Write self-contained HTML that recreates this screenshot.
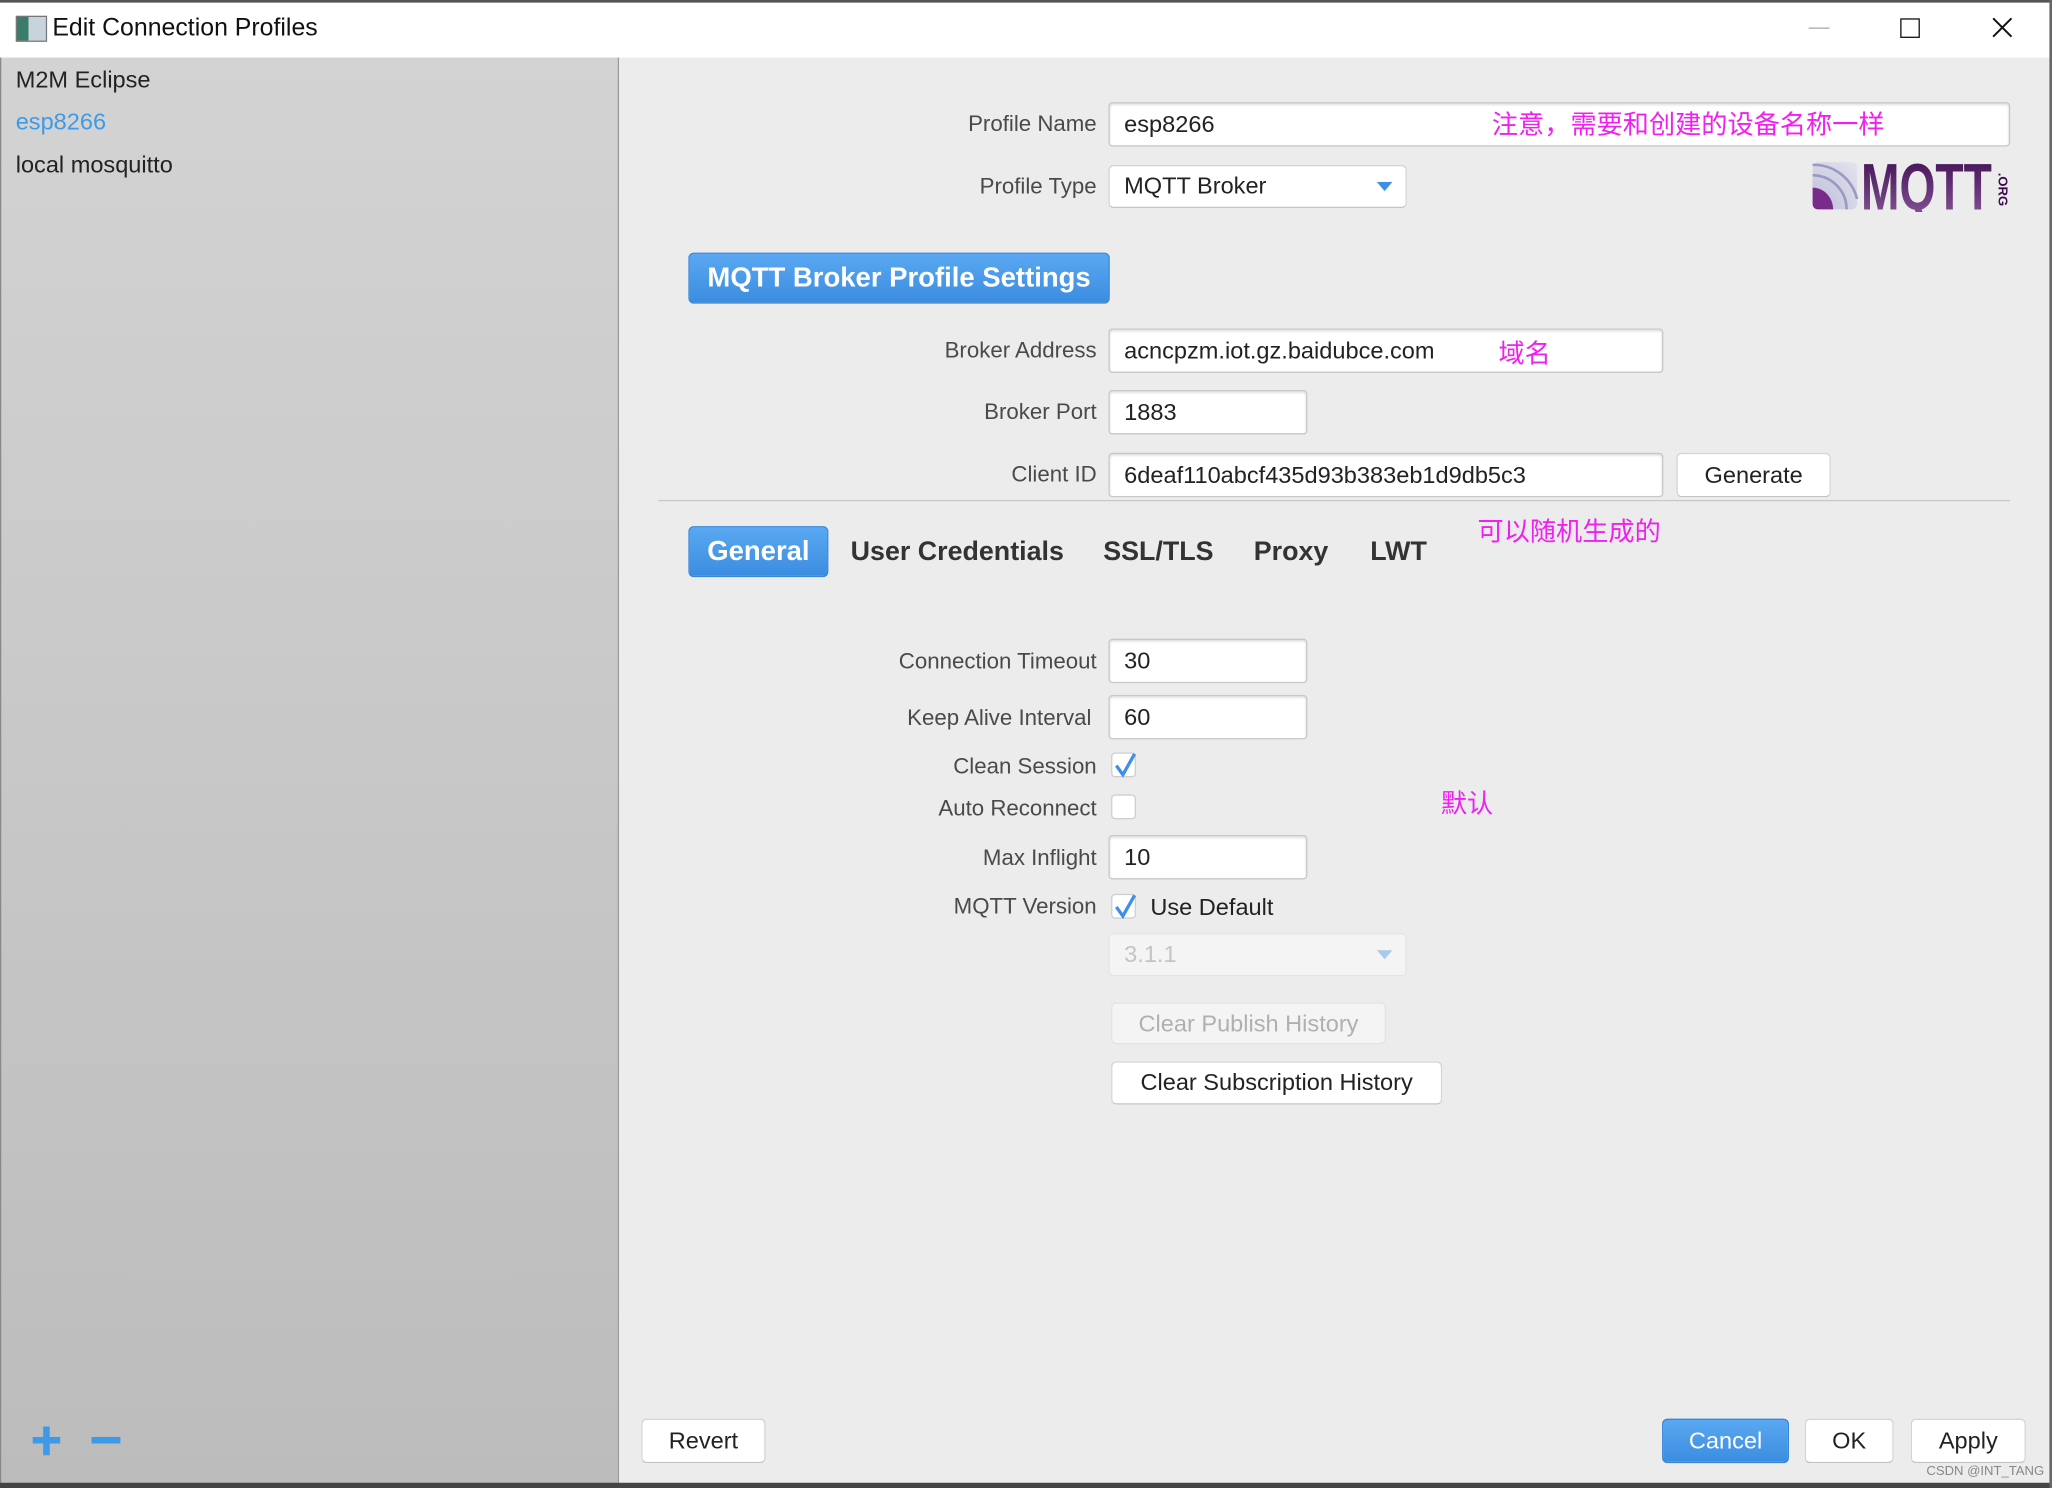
<!DOCTYPE html>
<html><head><meta charset="utf-8"><style>
html,body{margin:0;padding:0;width:2052px;height:1488px;overflow:hidden;background:#ececec}
#w{position:absolute;left:0;top:0;width:1568px;height:1137px;transform:scale(1.3087);transform-origin:0 0;font-family:"Liberation Sans","Noto Sans CJK SC",sans-serif;color:#333}
.a{position:absolute;white-space:nowrap}
.lbl{position:absolute;right:730px;font-size:17px;color:#4a4a4a;text-align:right;white-space:nowrap}
.in{position:absolute;background:#fff;border:1px solid #c8c8c8;border-radius:3px;box-shadow:inset 0 1px 2px rgba(0,0,0,.15);box-sizing:border-box;font-size:18px;color:#222;padding-left:11px;display:flex;align-items:center}
.btn{position:absolute;background:#fff;border:1px solid #d4d4d4;border-bottom-color:#c4c4c4;border-radius:4px;box-sizing:border-box;font-size:18px;color:#222;display:flex;align-items:center;justify-content:center}
.blue{background:linear-gradient(#5aa8f2,#3b8de0);color:#fff;border:1px solid #3a86d6;border-radius:4px}
.cb{position:absolute;width:19px;height:19px;background:#fff;border:1px solid #cfcfcf;border-radius:3px;box-sizing:border-box}
.ann{position:absolute;color:#f020f0;font-size:20px;white-space:nowrap}
.tab{position:absolute;font-size:20.5px;font-weight:bold;color:#333;top:410px}
</style></head><body><div id="w">
<div class="a" style="left:0;top:0;width:1568px;height:44px;background:#fff;border-top:2px solid #555;box-sizing:border-box"></div>
<div class="a" style="left:12px;top:12px;width:22px;height:18px;background:linear-gradient(90deg,#3a7b6a 40%,#c8d4dc 40%);border:1px solid #777"></div>
<div class="a" style="left:40px;top:11px;font-size:19px;color:#111">Edit Connection Profiles</div>
<div class="a" style="left:1382px;top:21px;width:16px;height:1px;background:#aaa"></div>
<div class="a" style="left:1452px;top:14px;width:13px;height:13px;border:1.5px solid #111"></div>
<svg class="a" style="left:1522px;top:13px" width="16" height="16"><path d="M1 1L15 15M15 1L1 15" stroke="#111" stroke-width="1.5"/></svg>
<div class="a" style="left:0;top:44px;width:471px;height:1093px;background:linear-gradient(#d3d3d3,#bcbcbc);border-right:1px solid #9a9a9a;border-left:1px solid #888"></div>
<div class="a" style="left:12px;top:51px;font-size:18px;color:#222">M2M Eclipse</div>
<div class="a" style="left:12px;top:83px;font-size:18px;color:#3d9ae8">esp8266</div>
<div class="a" style="left:12px;top:116px;font-size:18px;color:#222">local mosquitto</div>
<div class="a" style="left:25px;top:1098px;width:21px;height:5px;background:#3d9ae8"></div>
<div class="a" style="left:33px;top:1090px;width:5px;height:22px;background:#3d9ae8"></div>
<div class="a" style="left:70px;top:1098px;width:22px;height:5px;background:#3d9ae8"></div>
<div class="a" style="left:0;top:1133px;width:1568px;height:4px;background:#444"></div>
<div class="a" style="left:1566px;top:0;width:2px;height:1137px;background:#666"></div>
<div class="lbl" style="top:85px">Profile Name</div>
<div class="in" style="left:847px;top:78px;width:689px;height:34px">esp8266</div>
<div class="ann" style="left:1140px;top:79px">注意，需要和创建的设备名称一样</div>
<div class="lbl" style="top:133px">Profile Type</div>
<div class="btn" style="left:847px;top:126px;width:228px;height:33px;justify-content:flex-start;padding-left:11px">MQTT Broker</div>
<svg class="a" style="left:1052px;top:139px" width="12" height="8"><path d="M0 0H12L6 7Z" fill="#3d8fe0"/></svg>
<svg class="a" style="left:1385px;top:122px" width="152" height="40">
<defs><linearGradient id="g" x1="0" y1="0" x2="0" y2="1"><stop offset="0" stop-color="#3c0a4e"/><stop offset="1" stop-color="#8a5a9a"/></linearGradient>
<radialGradient id="r" cx="0" cy="1" r="1.3"><stop offset=".35" stop-color="#7a2a8a"/><stop offset=".36" stop-color="#c8c8e0"/><stop offset="1" stop-color="#e0e0ee"/></radialGradient></defs>
<rect x="0" y="2" width="34" height="36" rx="4" fill="url(#r)"/>
<path d="M0 12 A26 26 0 0 1 26 38 M0 4 A34 34 0 0 1 34 30" stroke="#9a9ac0" stroke-width="2" fill="none"/>
<text x="37" y="38" font-family="Liberation Sans" font-weight="bold" font-size="50" fill="url(#g)" textLength="100" lengthAdjust="spacingAndGlyphs">MQTT</text>
<text x="0" y="0" transform="translate(142,10) rotate(90)" font-family="Liberation Sans" font-weight="bold" font-size="10" fill="#3c0a4e">.ORG</text>
</svg>
<div class="a blue" style="left:526px;top:193px;width:322px;height:39px;font-size:21px;font-weight:bold;display:flex;align-items:center;justify-content:center;box-sizing:border-box">MQTT Broker Profile Settings</div>
<div class="lbl" style="top:258px">Broker Address</div>
<div class="in" style="left:847px;top:251px;width:424px;height:34px">acncpzm.iot.gz.baidubce.com</div>
<div class="ann" style="left:1145px;top:254px">域名</div>
<div class="lbl" style="top:305px">Broker Port</div>
<div class="in" style="left:847px;top:298px;width:152px;height:34px">1883</div>
<div class="lbl" style="top:353px">Client ID</div>
<div class="in" style="left:847px;top:346px;width:424px;height:34px">6deaf110abcf435d93b383eb1d9db5c3</div>
<div class="btn" style="left:1281px;top:346px;width:118px;height:34px">Generate</div>
<div class="a" style="left:503px;top:382px;width:1033px;height:1px;background:#c8c8c8"></div>
<div class="a blue" style="left:526px;top:402px;width:107px;height:39px;font-size:21px;font-weight:bold;display:flex;align-items:center;justify-content:center;box-sizing:border-box">General</div>
<div class="tab" style="left:650px">User Credentials</div>
<div class="tab" style="left:843px">SSL/TLS</div>
<div class="tab" style="left:958px">Proxy</div>
<div class="tab" style="left:1047px">LWT</div>
<div class="ann" style="left:1129px;top:390px">可以随机生成的</div>
<div class="lbl" style="top:496px">Connection Timeout</div>
<div class="in" style="left:847px;top:488px;width:152px;height:34px">30</div>
<div class="lbl" style="top:539px;right:734px">Keep Alive Interval</div>
<div class="in" style="left:847px;top:531px;width:152px;height:34px">60</div>
<div class="lbl" style="top:576px">Clean Session</div>
<div class="cb" style="left:849px;top:575px"></div>
<svg class="a" style="left:850px;top:573px" width="20" height="22"><path d="M3 12L8 19L17 3" stroke="#3d8fe8" stroke-width="2.5" fill="none"/></svg>
<div class="lbl" style="top:608px">Auto Reconnect</div>
<div class="cb" style="left:849px;top:607px"></div>
<div class="ann" style="left:1101px;top:598px">默认</div>
<div class="lbl" style="top:646px">Max Inflight</div>
<div class="in" style="left:847px;top:638px;width:152px;height:34px">10</div>
<div class="lbl" style="top:683px">MQTT Version</div>
<div class="cb" style="left:849px;top:683px"></div>
<svg class="a" style="left:850px;top:681px" width="20" height="22"><path d="M3 12L8 19L17 3" stroke="#3d8fe8" stroke-width="2.5" fill="none"/></svg>
<div class="a" style="left:879px;top:683px;font-size:18px;color:#222">Use Default</div>
<div class="btn" style="left:847px;top:713px;width:228px;height:33px;justify-content:flex-start;padding-left:11px;background:#f4f4f4;color:#c4c4c4;border-color:#e4e4e4">3.1.1</div>
<svg class="a" style="left:1052px;top:726px" width="12" height="8"><path d="M0 0H12L6 7Z" fill="#a8c8ec"/></svg>
<div class="btn" style="left:849px;top:766px;width:210px;height:32px;background:#f4f4f4;color:#b0b0b0;border-color:#e4e4e4">Clear Publish History</div>
<div class="btn" style="left:849px;top:811px;width:253px;height:33px">Clear Subscription History</div>
<div class="btn" style="left:490px;top:1084px;width:95px;height:34px">Revert</div>
<div class="btn blue" style="left:1270px;top:1084px;width:97px;height:34px;color:#fff">Cancel</div>
<div class="btn" style="left:1379px;top:1084px;width:68px;height:34px">OK</div>
<div class="btn" style="left:1460px;top:1084px;width:88px;height:34px">Apply</div>
<div class="a" style="left:1472px;top:1119px;font-size:10px;color:#888">CSDN @INT_TANG</div>
</div></body></html>
